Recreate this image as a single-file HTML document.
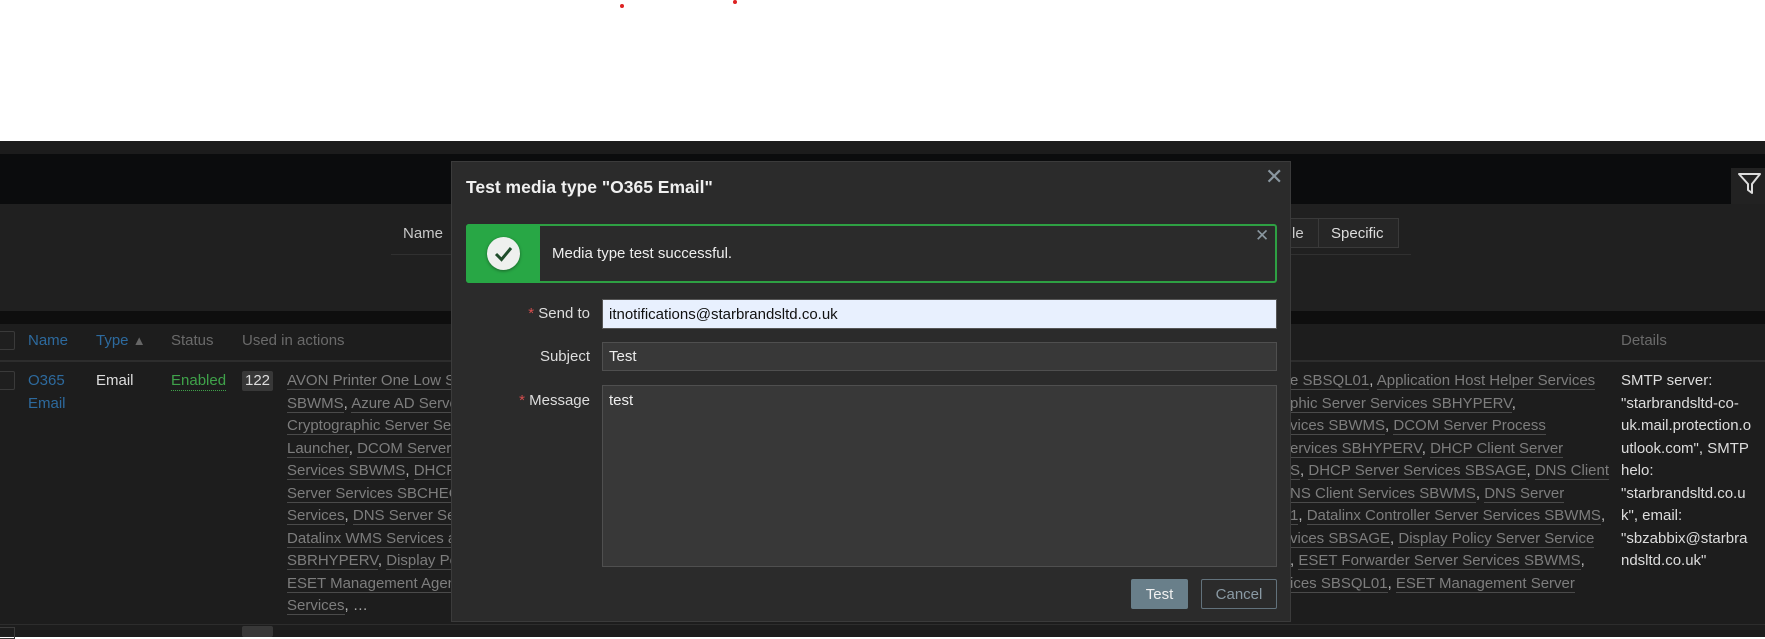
<!DOCTYPE html>
<html><head><meta charset="utf-8"><style>
*{margin:0;padding:0;box-sizing:border-box}
body{width:1765px;height:637px;overflow:hidden;background:#fff;font-family:"Liberation Sans",Arial,sans-serif;font-size:15px;position:relative}
.a{position:absolute}
.l{color:#7d7d7d;border-bottom:1px solid #4a4a4a}
.lines{color:#bbb}
.lines div{height:22.5px;line-height:22.5px;white-space:nowrap}
</style></head><body>
<div class="a" style="left:620px;top:4px;width:4px;height:4px;border-radius:2px;background:#d22"></div>
<div class="a" style="left:733px;top:0px;width:4px;height:4px;border-radius:2px;background:#d22"></div>
<div class="a" style="left:0;top:141px;width:1765px;height:496px;background:#1c1c1c"></div>
<div class="a" style="left:0;top:154px;width:1765px;height:50px;background:#0b0c0d"></div>
<div class="a" style="left:1731px;top:168px;width:34px;height:36px;background:#222"></div>
<svg class="a" style="left:1737px;top:172px" width="26" height="24" viewBox="0 0 26 24"><path d="M2 2 H23 L15 12 V21 L11 18 V12 Z" fill="none" stroke="#ddd" stroke-width="2" stroke-linejoin="round"/></svg>
<div class="a" style="left:0;top:204px;width:1765px;height:107px;background:#202020"></div>
<div class="a" style="left:403px;top:225px;color:#c8c8c8">Name</div>
<div class="a" style="left:391px;top:254px;width:1020px;height:1px;background:#303030"></div>
<div class="a" style="left:1260px;top:218px;width:139px;height:30px;border:1px solid #3a3a3a;background:#262626"></div>
<div class="a" style="left:1318px;top:218px;width:1px;height:30px;background:#3a3a3a"></div>
<div class="a" style="left:1292px;top:225px;color:#ccc">le</div>
<div class="a" style="left:1331px;top:225px;color:#ddd">Specific</div>
<div class="a" style="left:0;top:311px;width:1765px;height:13px;background:#0e0e0e"></div>
<div class="a" style="left:0;top:324px;width:1765px;height:313px;background:#1d1d1d"></div>
<div class="a" style="left:0;top:360px;width:1765px;height:2px;background:#2d2d2d"></div>
<div class="a" style="left:0;top:624px;width:1765px;height:1px;background:#2d2d2d"></div>
<div class="a" style="left:-2px;top:331px;width:17px;height:19px;border:1px solid #3a3a3a;border-radius:2px;background:#1f1f1f"></div>
<div class="a" style="left:-2px;top:371px;width:17px;height:19px;border:1px solid #3a3a3a;border-radius:2px;background:#1f1f1f"></div>
<div class="a" style="left:28px;top:332px;color:#2d6a9e">Name</div>
<div class="a" style="left:96px;top:332px;color:#2d6a9e">Type <span style="font-size:13px;color:#666">▲</span></div>
<div class="a" style="left:171px;top:332px;color:#6a6a6a">Status</div>
<div class="a" style="left:242px;top:332px;color:#6a6a6a">Used in actions</div>
<div class="a" style="left:1621px;top:332px;color:#6a6a6a">Details</div>
<div class="a lines" style="left:28px;top:370px;color:#2d6a9e"><div>O365</div><div>Email</div></div>
<div class="a" style="left:96px;top:370px;line-height:22.5px;color:#ddd">Email</div>
<div class="a" style="left:171px;top:370px;line-height:22.5px;color:#3fa24a;border-bottom:1px dotted #3fa24a;height:21px">Enabled</div>
<div class="a" style="left:242px;top:371px;width:31px;height:20px;background:#383838;border-radius:2px;color:#ddd;text-align:center;line-height:20px">122</div>
<div class="a lines" style="left:287px;top:370px;width:165px;overflow:hidden">
<div><span class="l">AVON Printer One Low Services</span></div>
<div><span class="l">SBWMS</span>, <span class="l">Azure AD Server</span></div>
<div><span class="l">Cryptographic Server Services</span></div>
<div><span class="l">Launcher</span>, <span class="l">DCOM Server Process</span></div>
<div><span class="l">Services SBWMS</span>, <span class="l">DHCP Client</span></div>
<div><span class="l">Server Services SBCHECK</span></div>
<div><span class="l">Services</span>, <span class="l">DNS Server Services</span></div>
<div><span class="l">Datalinx WMS Services and</span></div>
<div><span class="l">SBRHYPERV</span>, <span class="l">Display Policy</span></div>
<div><span class="l">ESET Management Agent</span></div>
<div><span class="l">Services</span>, <span style="color:#aaa">…</span></div>
</div>
<div class="a lines" style="left:1290px;top:370px;width:330px;overflow:hidden">
<div><span class="l">e SBSQL01</span>, <span class="l">Application Host Helper Services</span></div>
<div><span class="l">phic Server Services SBHYPERV</span>,</div>
<div><span class="l">vices SBWMS</span>, <span class="l">DCOM Server Process</span></div>
<div><span class="l">ervices SBHYPERV</span>, <span class="l">DHCP Client Server</span></div>
<div><span class="l">S</span>, <span class="l">DHCP Server Services SBSAGE</span>, <span class="l">DNS Client</span></div>
<div><span class="l">NS Client Services SBWMS</span>, <span class="l">DNS Server</span></div>
<div><span class="l">1</span>, <span class="l">Datalinx Controller Server Services SBWMS</span>,</div>
<div><span class="l">vices SBSAGE</span>, <span class="l">Display Policy Server Service</span></div>
<div>, <span class="l">ESET Forwarder Server Services SBWMS</span>,</div>
<div><span class="l">ices SBSQL01</span>, <span class="l">ESET Management Server</span></div>
</div>
<div class="a lines" style="left:1621px;top:370px;color:#ddd">
<div>SMTP server:</div><div>"starbrandsltd-co-</div><div>uk.mail.protection.o</div><div>utlook.com", SMTP</div><div>helo:</div><div>"starbrandsltd.co.u</div><div>k", email:</div><div>"sbzabbix@starbra</div><div>ndsltd.co.uk"</div>
</div>
<div class="a" style="left:242px;top:626px;width:31px;height:11px;background:#383838;border-radius:2px"></div>
<div class="a" style="left:-2px;top:627px;width:17px;height:12px;border:1px solid #3a3a3a"></div>

<!-- dialog -->
<div class="a" style="left:451px;top:161px;width:840px;height:461px;background:#2b2b2b;border:1px solid #3b3b3b"></div>
<div class="a" style="left:466px;top:177px;color:#f0f0f0;font-weight:bold;font-size:17.5px">Test media type "O365 Email"</div>
<div class="a" style="left:1265px;top:164px;color:#8a97a0;font-size:22px">✕</div>
<div class="a" style="left:466px;top:224px;width:811px;height:59px;border:2px solid #2ea043;border-radius:3px;background:#2b2b2b"></div>
<div class="a" style="left:466px;top:224px;width:74px;height:59px;background:#28a745;border-radius:3px 0 0 3px"></div>
<div class="a" style="left:487px;top:237px;width:33px;height:33px;border-radius:50%;background:#eef0ee;box-shadow:0 1px 3px rgba(0,0,0,.4)"></div>
<svg class="a" style="left:487px;top:237px" width="33" height="33" viewBox="0 0 33 33"><path d="M9 17 L14.5 22.5 L24 11" fill="none" stroke="#1f4d2b" stroke-width="3"/></svg>
<div class="a" style="left:552px;top:245px;color:#eee">Media type test successful.</div>
<div class="a" style="left:1255px;top:226px;color:#8a97a0;font-size:17px">✕</div>
<div class="a" style="left:440px;top:305px;width:150px;text-align:right;color:#ddd"><span style="color:#d64e4e">*</span> Send to</div>
<div class="a" style="left:440px;top:348px;width:150px;text-align:right;color:#ddd">Subject</div>
<div class="a" style="left:440px;top:392px;width:150px;text-align:right;color:#ddd"><span style="color:#d64e4e">*</span> Message</div>
<div class="a" style="left:602px;top:299px;width:675px;height:30px;background:#e8f0fe;border:1px solid #555;padding-left:6px;line-height:29px;color:#111">itnotifications@starbrandsltd.co.uk</div>
<div class="a" style="left:602px;top:342px;width:675px;height:29px;background:#383838;border:1px solid #4f4f4f;padding-left:6px;line-height:28px;color:#eee">Test</div>
<div class="a" style="left:602px;top:385px;width:675px;height:182px;background:#383838;border:1px solid #4f4f4f;padding:6px 6px;color:#eee">test</div>
<div class="a" style="left:1131px;top:579px;width:57px;height:30px;background:#697f8a;border-radius:2px;color:#f0f0f0;text-align:center;line-height:31px">Test</div>
<div class="a" style="left:1201px;top:579px;width:76px;height:30px;border:1px solid #62727c;border-radius:2px;color:#8a9aa4;text-align:center;line-height:29px">Cancel</div>
</body></html>
